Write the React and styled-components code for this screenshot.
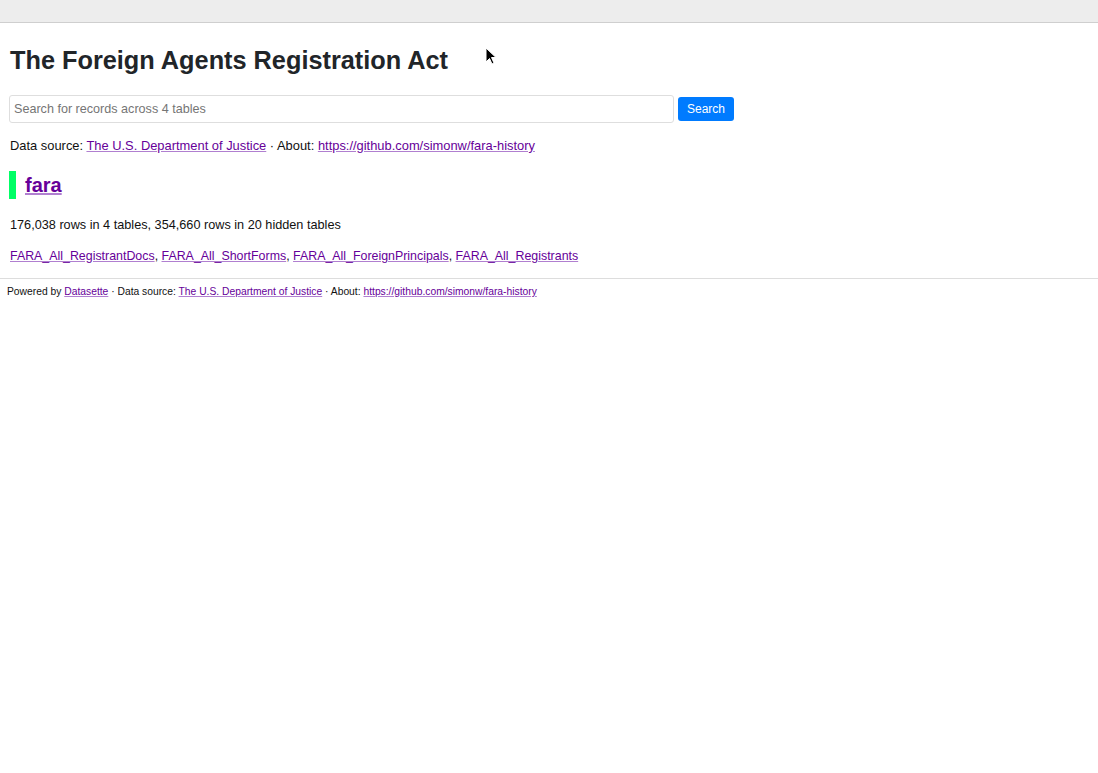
import React from 'react';
import styled, { createGlobalStyle } from 'styled-components';

const INK = '#212529';
const LINK = '#660099';

const GlobalStyle = createGlobalStyle`
  html, body {
    margin: 0;
    padding: 0;
    background: #fff;
  }
  body {
    font-family: 'Liberation Sans', Helvetica, Arial, sans-serif;
    color: #111;
  }
`;

const Chrome = styled.div`
  height: 22px;
  background: #ededed;
  border-bottom: 1px solid #cfcfcf;
`;

const Page = styled.div`
  position: relative;
`;

const Section = styled.section`
  padding: 0 10px;
`;

const Title = styled.h1`
  font-size: 25.3px;
  font-weight: 700;
  color: ${INK};
  margin: 0;
  padding: 23px 0 21px;
  line-height: 28px;
`;

const SearchForm = styled.form`
  display: flex;
  align-items: center;
  gap: 4px;
  margin: 0 0 14px -1px;
`;

const SearchInput = styled.input`
  width: 665px;
  height: 28px;
  box-sizing: border-box;
  border: 1px solid #dedede;
  border-radius: 3px;
  padding: 0 4px;
  font-family: 'Liberation Sans', Helvetica, Arial, sans-serif;
  font-size: 12.6px;
  color: #333;
  &::placeholder {
    color: #757575;
  }
`;

const SearchButton = styled.button`
  height: 24px;
  padding: 0 9px;
  border: none;
  border-radius: 3px;
  background: #007bff;
  color: #fff;
  font-family: 'Liberation Sans', Helvetica, Arial, sans-serif;
  font-size: 12px;
`;

const Meta = styled.p`
  font-size: ${(p) => p.$size || 13}px;
  line-height: 17px;
  margin: 0 0 ${(p) => p.$after || 0}px;
`;

const A = styled.a`
  color: ${LINK};
  text-decoration: underline;
  text-decoration-color: #b07fd0;
`;

const DbHeading = styled.h2`
  font-size: 20px;
  font-weight: 700;
  margin: 0 0 18px -1px;
  padding-left: 9px;
  border-left: 7px solid #00ff66;
  line-height: 28px;
`;

const Footer = styled.footer`
  border-top: 1px solid #ddd;
  margin-top: 13px;
  padding: 6px 7px;
  font-size: 10.3px;
  line-height: 13px;
`;

const Cursor = styled.svg`
  position: absolute;
  left: 485px;
  top: 24px;
`;

const tables = [
  'FARA_All_RegistrantDocs',
  'FARA_All_ShortForms',
  'FARA_All_ForeignPrincipals',
  'FARA_All_Registrants',
];

export default function App() {
  return (
    <>
      <GlobalStyle />
      <Chrome />
      <Page>
        <Section>
          <Title>The Foreign Agents Registration Act</Title>
          <SearchForm onSubmit={(e) => e.preventDefault()}>
            <SearchInput placeholder="Search for records across 4 tables" />
            <SearchButton type="submit">Search</SearchButton>
          </SearchForm>
          <Meta $size={12.9} $after={17}>
            Data source: <A href="#">The U.S. Department of Justice</A> · About:{' '}
            <A href="#">https://github.com/simonw/fara-history</A>
          </Meta>
          <DbHeading>
            <A href="#">fara</A>
          </DbHeading>
          <Meta $size={12.7} $after={14}>
            176,038 rows in 4 tables, 354,660 rows in 20 hidden tables
          </Meta>
          <Meta $size={12.4}>
            {tables.map((t, i) => (
              <React.Fragment key={t}>
                <A href="#">{t}</A>
                {i < tables.length - 1 ? ', ' : ''}
              </React.Fragment>
            ))}
          </Meta>
        </Section>
        <Footer>
          Powered by <A href="#">Datasette</A> · Data source:{' '}
          <A href="#">The U.S. Department of Justice</A> · About:{' '}
          <A href="#">https://github.com/simonw/fara-history</A>
        </Footer>
        <Cursor width="12" height="19" viewBox="0 0 12 19">
          <path d="M1 1 L1 15 L4.5 11.5 L7 17 L9 16 L6.5 10.5 L11 10.5 Z" fill="#000" stroke="#fff" strokeWidth="1" />
        </Cursor>
      </Page>
    </>
  );
}
